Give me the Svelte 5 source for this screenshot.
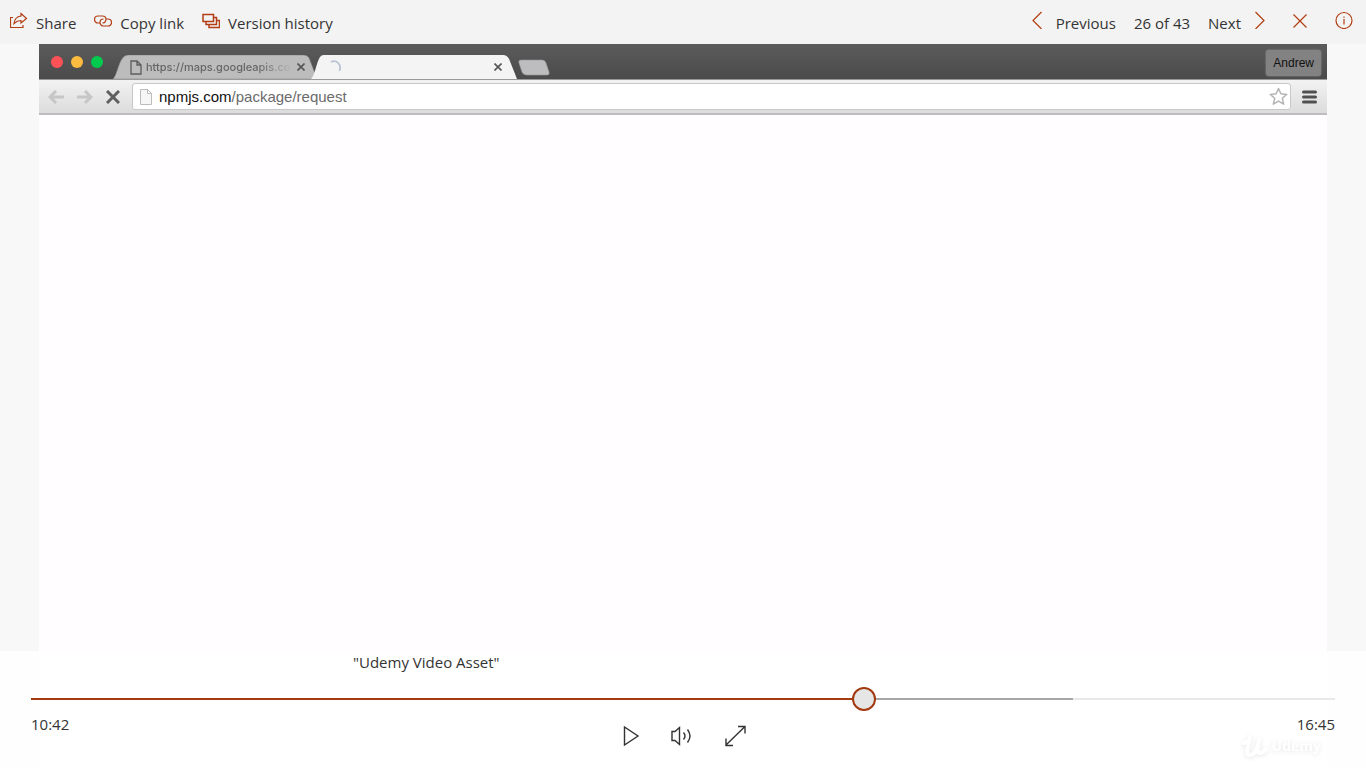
<script>
  let current = $state(642);
  const duration = 1005;
  const buffered = 803;
  const clock = (s) => `${Math.floor(s / 60)}:${String(s % 60).padStart(2, '0')}`;
  const percent = (s) => (s / duration) * 100;
</script>

<div class="viewer">
  <header class="topbar">
    <nav class="group" aria-label="File actions">
      <button class="command">
        <svg class="accent" width="18" height="18" viewBox="0 0 18 18">
          <path d="M3 6.500H.5v10H13v-2.500" />
          <path d="M11 2.500l5.500 5-5.500 4.500v-2.500C8 9.500 6 10.500 4 12.500 4.500 8 7 5.500 11 5z" />
        </svg>
        <span>Share</span>
      </button>
      <button class="command">
        <svg class="accent" width="18" height="18" viewBox="0 0 18 18">
          <path d="M6 12H4A3.500 3.500 0 0 1 4 5h4.500a3.500 3.500 0 0 1 0 7" />
          <path d="M12 8h2a3.500 3.500 0 0 1 0 7H9.500a3.500 3.500 0 0 1 0-7" />
        </svg>
        <span>Copy link</span>
      </button>
      <button class="command">
        <svg class="accent" width="18" height="18" viewBox="0 0 18 18">
          <path stroke-width="1.500" d="M1 3.500h10.500v7H1zM11.500 6.500h3v7H4v-3M14.500 9.500h3v7H7v-3" />
        </svg>
        <span>Version history</span>
      </button>
    </nav>
    <nav class="group" aria-label="File navigation">
      <button class="command step">
        <svg class="accent" width="11" height="18" viewBox="0 0 11 18"><path d="M9.500 1L1 9.500 9.500 18" /></svg>
        <span>Previous</span>
      </button>
      <span class="count">26 of 43</span>
      <button class="command step">
        <span>Next</span>
        <svg class="accent" width="11" height="18" viewBox="0 0 11 18"><path d="M1.500 1L10 9.500 1.500 18" /></svg>
      </button>
      <button class="command close" aria-label="Close">
        <svg class="accent" width="14" height="18" viewBox="0 0 14 18"><path d="M.5 3.500l13 13M13.500 3.500l-13 13" /></svg>
      </button>
      <button class="command" aria-label="Information">
        <svg class="accent" width="18" height="18" viewBox="0 0 18 18">
          <circle cx="9" cy="9.500" r="8" /><path d="M9 8v5.500M9 5.500v1.200" />
        </svg>
      </button>
    </nav>
  </header>

  <main class="stage">
    <section class="video" aria-label="Video">
      <div class="titlebar">
        <div class="lights"><i class="red"></i><i class="amber"></i><i class="green"></i></div>
        <div class="tab idle">
          <svg class="shape" viewBox="0 0 206 25" preserveAspectRatio="none">
            <path fill="#bdbcbd" stroke="#8d8d8d" stroke-width=".6" d="M0 25C4 22 6 4 12 1q2-1 4-1H190q4 0 6 3l8 22z" />
          </svg>
          <svg class="sheet" width="12" height="15" viewBox="0 0 12 15">
            <path fill="none" stroke="#5c5c5c" stroke-width="1.300" d="M1 1h6l4 4v9H1zM7 1v4h4" />
          </svg>
          <span class="tab-title">https://maps.googleapis.co</span>
          <svg class="x" width="8" height="8" viewBox="0 0 8 8"><path d="M.5.5l7 7M7.500.5l-7 7" /></svg>
        </div>
        <div class="tab active">
          <svg class="shape" viewBox="0 0 206 25" preserveAspectRatio="none">
            <path fill="#f4f4f5" d="M0 25C4 22 6 4 10 1q1-1 3-1H192q4 0 6 4l8 21z" />
          </svg>
          <svg class="spinner" width="14" height="14" viewBox="0 0 14 14">
            <path fill="none" stroke="#b9c3d3" stroke-width="1.800" d="M3 2C8-.5 14 4 11.500 11" />
          </svg>
          <svg class="x" width="8" height="8" viewBox="0 0 8 8"><path d="M.5.5l7 7M7.500.5l-7 7" /></svg>
        </div>
        <svg class="new-tab" width="32" height="17" viewBox="0 0 32 17">
          <path fill="#bdbcbe" stroke="#989898" stroke-width=".6" d="M3 1h21q3 0 4 3l3 9q1 3-2 3H9q-4 0-5-3L1 4q-1-3 2-3z" />
        </svg>
        <span class="profile">Andrew</span>
      </div>
      <div class="toolbar">
        <svg class="back" width="17" height="14" viewBox="0 0 17 14"><path d="M8 1L2 7l6 6M2 7h14" /></svg>
        <svg class="forward" width="17" height="14" viewBox="0 0 17 14"><path d="M9 1l6 6-6 6M15 7H1" /></svg>
        <svg class="stop" width="14" height="14" viewBox="0 0 14 14"><path d="M1 1l12 12M13 1L1 13" /></svg>
        <div class="address">
          <svg width="12" height="16" viewBox="0 0 12 16">
            <path fill="#f6f6f6" stroke="#bcbcbc" d="M.5.5h7l4 4v11H.5zM7.500.5v4h4" />
          </svg>
          <span class="url"><b>npmjs.com</b>/package/request</span>
          <svg width="20" height="19" viewBox="0 0 20 19">
            <path fill="none" stroke="#b4b4b4" stroke-width="1.500" stroke-linejoin="round" d="M10.500 1.500l2.400 5.300 5.800.6-4.400 3.900 1.400 5.900-5.200-3.100-5.200 3.100 1.400-5.900-4.400-3.900 5.800-.6z" />
          </svg>
        </div>
        <svg class="menu" width="15" height="14" viewBox="0 0 15 14"><path d="M1.500 2h12M1.500 7h12M1.500 12h12" /></svg>
      </div>
    </section>

    <div class="watermark" aria-hidden="true">
      <svg width="30" height="24" viewBox="0 0 30 24">
        <path fill="none" stroke="#fff" stroke-width="4" stroke-linecap="round" stroke-linejoin="round" d="M4 9Q10 7 10 3C9 9 4 21 10 21 15 21 18 13 19 6c-1 7-3 13 1 13q3 0 6-4" />
      </svg>
      <span>Udemy</span>
    </div>

    <section class="player" aria-label="Playback controls">
      <p class="caption">"Udemy Video Asset"</p>
      <div class="seek">
        <div class="bar loaded" style:width="{percent(buffered)}%"></div>
        <div class="bar played" style:width="{percent(current)}%"></div>
        <input type="range" min="0" max={duration} bind:value={current} aria-label="Seek" />
      </div>
      <div class="controls">
        <time>{clock(current)}</time>
        <div class="buttons">
          <button aria-label="Play">
            <svg width="22" height="22" viewBox="0 0 22 22"><path d="M4.500 2v18L18 11z" /></svg>
          </button>
          <button aria-label="Volume">
            <svg width="24" height="22" viewBox="0 0 24 22">
              <path d="M1 6.500H4L8.500 2.500v17L4 15.500H1z" />
              <path d="M12.500 7.500q3 3.500 0 7M16.500 4.500q5 6.500 0 13" />
            </svg>
          </button>
          <button aria-label="Full screen">
            <svg width="22" height="22" viewBox="0 0 22 22"><path d="M2 20L21 1.500M14 1.500h7v7M2 13.500V20.500h7" /></svg>
          </button>
        </div>
        <time>{clock(duration)}</time>
      </div>
    </section>
  </main>
</div>

<style>
  :global(body) { margin: 0; }
  .viewer {
    display: flex;
    flex-direction: column;
    min-height: 100vh;
    font-family: "Open Sans", "Noto Sans", sans-serif;
    font-size: 15px;
    line-height: 20px;
    color: #333;
  }
  button {
    padding: 0;
    border: 0;
    background: none;
    font: inherit;
    color: inherit;
    cursor: pointer;
  }
  svg { display: block; flex: none; }
  .topbar {
    display: flex;
    justify-content: space-between;
    height: 44px;
    padding: 0 13px 0 10px;
    background: #f3f3f3;
    white-space: nowrap;
  }
  .group { display: flex; align-items: center; gap: 18px; }
  .command { display: flex; align-items: center; gap: 8px; }
  .command svg { margin-bottom: 4px; }
  .command span, .count { padding-top: 2px; }
  .step { gap: 13px; }
  .close { margin: 0 10px; }
  .accent { fill: none; stroke: #b23e14; stroke-width: 1.2; }

  .stage {
    position: relative;
    display: flex;
    flex: 1;
    padding: 0 39px;
    background: #f8f8f8;
  }
  .video { flex: 1; min-width: 0; background: #fffdff; }
  .titlebar {
    display: flex;
    align-items: flex-end;
    height: 36px;
    background: linear-gradient(#5c5b5c, #4c4b4c);
    border-bottom: 1px solid #999;
    box-sizing: border-box;
  }
  .lights { display: flex; gap: 8px; padding: 0 10px 11px 12px; }
  .lights i { width: 12px; height: 12px; border-radius: 50%; }
  .red { background: #ff5257; }
  .amber { background: #fdbc40; }
  .green { background: #00cb4e; }
  .tab {
    position: relative;
    display: flex;
    align-items: center;
    width: 206px;
    height: 24px;
    box-sizing: border-box;
  }
  .shape { position: absolute; inset: 0; width: 100%; height: 100%; }
  .tab > :not(.shape) { position: relative; }
  .idle { padding: 0 14px 0 17px; }
  .active { margin-left: -8px; padding: 0 15px 0 17px; }
  .tab-title {
    flex: 1;
    overflow: hidden;
    margin: 0 4px;
    font-family: Inter, sans-serif;
    font-size: 11px;
    font-weight: 500;
    white-space: nowrap;
    color: #666;
    mask-image: linear-gradient(90deg, #000 75%, transparent);
  }
  .x { margin-left: auto; fill: none; stroke: #555; stroke-width: 1.6; }
  .new-tab { margin: 0 0 3px 1px; }
  .profile {
    align-self: center;
    margin: 2px 6px 0 auto;
    padding: 3px 7px;
    border-radius: 3px;
    background: #838283;
    font-family: "Liberation Sans", Arial, sans-serif;
    font-size: 12px;
    color: #111;
    box-shadow: 0 0 2px #999;
  }
  .toolbar {
    display: flex;
    align-items: center;
    height: 35px;
    box-sizing: border-box;
    padding: 0 10px 0 9px;
    background: linear-gradient(#f2f2f2, #dcdcdc);
    border-bottom: 2px solid #bdbdbd;
  }
  .toolbar > svg { fill: none; stroke-width: 3; }
  .back, .forward { margin-right: 11px; stroke: #c6c6c6; }
  .stop { margin: 0 12px 0 2px; stroke: #606060; }
  .menu { margin-left: 11px; stroke: #505050; stroke-linecap: round; }
  .address {
    display: flex;
    flex: 1;
    align-items: center;
    gap: 7px;
    height: 27px;
    padding: 0 2px 0 7px;
    border: 1px solid #c8c8c8;
    border-radius: 3px;
    box-sizing: border-box;
    background: #fff;
    font-family: "Liberation Sans", Arial, sans-serif;
    font-size: 15px;
  }
  .url { flex: 1; color: #6b6b6b; }
  .url b { font-weight: 400; color: #111; }

  .watermark {
    position: absolute;
    right: 45px;
    bottom: 10px;
    display: flex;
    align-items: center;
    gap: 2px;
    font-family: "Open Sans", sans-serif;
    font-size: 14px;
    font-weight: 700;
    color: #fff;
    filter: drop-shadow(0 1px 2px #888);
  }
  .player {
    position: absolute;
    inset: auto 0 0;
    height: 117px;
    padding: 0 31px;
    box-sizing: border-box;
    background: rgb(255 255 255 / 80%);
  }
  .caption { max-width: 660px; margin: 1px auto 0; }
  .seek {
    position: relative;
    height: 2px;
    margin-top: 26px;
    background: #e9e9e9;
  }
  .bar { position: absolute; left: 0; height: 2px; }
  .loaded { background: #a6a6a6; }
  .played { background: #a33a10; }
  .seek input {
    position: absolute;
    left: -12px;
    top: -11px;
    width: calc(100% + 24px);
    height: 24px;
    margin: 0;
    appearance: none;
    background: none;
  }
  .seek input::-webkit-slider-thumb {
    appearance: none;
    width: 24px;
    height: 24px;
    border: 2px solid #a33a10;
    border-radius: 50%;
    box-sizing: border-box;
    background: #e6e6e6;
  }
  .controls { display: flex; justify-content: space-between; margin-top: 14px; }
  .buttons { display: flex; gap: 2px; padding-top: 10px; }
  .buttons button { display: grid; place-items: center; width: 50px; height: 24px; }
  .buttons svg { fill: none; stroke: #333; stroke-width: 1.4; }
</style>
